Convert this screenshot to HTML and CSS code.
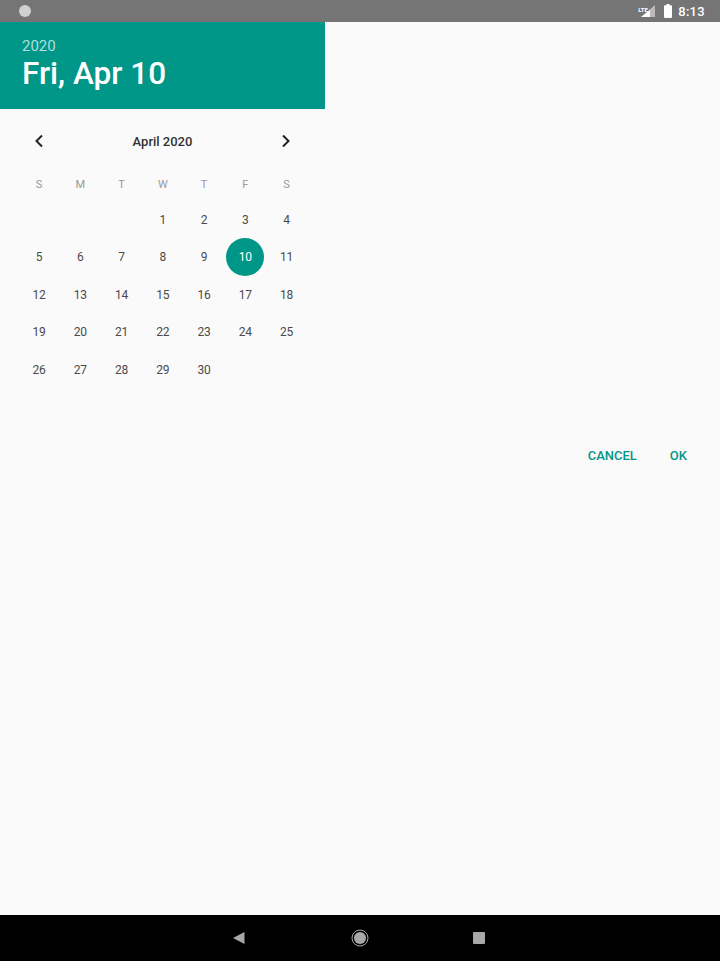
FILE: index.html
```html
<!DOCTYPE html>
<html lang="en">
<head>
    <meta charset="UTF-8">
    <meta name="viewport" content="width=device-width, initial-scale=1.0">
    <title>Date Picker</title>
    <link rel="stylesheet" href="styles.css">
</head>
<body>
    <div class="status-bar">
        <span class="status-dot"></span>
        <div class="status-right">
            <svg class="status-signal" width="20" height="14" viewBox="0 0 20 14">
                <path d="M17 1V13H3z" fill="#fff" opacity="0.5"/>
                <path d="M12 6V13H3z" fill="#fff"/>
            </svg>
            <span class="lte">LTE</span>
            <svg class="status-battery" width="8" height="14" viewBox="0 0 8 14">
                <path d="M2.5 0h3v1.2h1.5a1 1 0 0 1 1 1V13a1 1 0 0 1-1 1H1a1 1 0 0 1-1-1V2.2a1 1 0 0 1 1-1h1.5z" fill="#fff"/>
            </svg>
            <span class="status-time">8:13</span>
        </div>
    </div>

    <div class="dialog">
        <div class="picker">
            <div class="picker-header">
                <div class="picker-year">2020</div>
                <div class="picker-date">Fri, Apr 10</div>
            </div>

            <div class="month-row">
                <svg class="chevron" width="12" height="14" viewBox="0 0 12 14">
                    <path d="M9 1.5L3.5 7L9 12.5" fill="none" stroke="#222" stroke-width="2"/>
                </svg>
                <span class="month-name">April 2020</span>
                <svg class="chevron" width="12" height="14" viewBox="0 0 12 14">
                    <path d="M3 1.5L8.5 7L3 12.5" fill="none" stroke="#222" stroke-width="2"/>
                </svg>
            </div>

            <div class="weekdays">
                <span>S</span><span>M</span><span>T</span><span>W</span><span>T</span><span>F</span><span>S</span>
            </div>

            <div class="days">
                <span></span><span></span><span></span><span>1</span><span>2</span><span>3</span><span>4</span>
                <span>5</span><span>6</span><span>7</span><span>8</span><span>9</span><span class="selected">10</span><span>11</span>
                <span>12</span><span>13</span><span>14</span><span>15</span><span>16</span><span>17</span><span>18</span>
                <span>19</span><span>20</span><span>21</span><span>22</span><span>23</span><span>24</span><span>25</span>
                <span>26</span><span>27</span><span>28</span><span>29</span><span>30</span><span></span><span></span>
            </div>
        </div>

        <div class="actions">
            <span class="action">CANCEL</span>
            <span class="action">OK</span>
        </div>
    </div>

    <div class="nav-bar">
        <svg width="14" height="14" viewBox="0 0 14 14">
            <path d="M12.5 1V13L1 7z" fill="#a8a8a8"/>
        </svg>
        <svg width="18" height="18" viewBox="0 0 18 18">
            <circle cx="9" cy="9" r="8" fill="none" stroke="#a8a8a8" stroke-width="1"/>
            <circle cx="9" cy="9" r="6" fill="#a8a8a8"/>
        </svg>
        <svg width="12" height="12" viewBox="0 0 12 12">
            <rect width="12" height="12" rx="1" fill="#a8a8a8"/>
        </svg>
    </div>
</body>
</html>
```

FILE: styles.css
```css
html, body {
    height: 100%;
}
body {
    margin: 0;
    display: flex;
    flex-direction: column;
    font-family: Roboto, "Noto Sans", sans-serif;
    background-color: #FAFAFA;
    overflow: hidden;
}

/* status bar */
.status-bar {
    height: 22px;
    padding: 0 15px 0 19px;
    display: flex;
    align-items: center;
    justify-content: space-between;
    box-sizing: border-box;
    background-color: #757575;
}
.status-dot {
    width: 12px;
    height: 12px;
    border-radius: 50%;
    background-color: #D0D0D0;
}
.status-right {
    position: relative;
    display: flex;
    align-items: center;
    color: white;
}
.status-signal {
    margin-right: 6px;
}
.lte {
    position: absolute;
    left: 0;
    top: 2px;
    font-size: 6px;
    font-weight: 700;
    line-height: 7px;
}
.status-battery {
    margin-right: 6px;
}
.status-time {
    font-size: 13px;
    font-weight: 500;
    letter-spacing: 0.3px;
}

/* picker */
.dialog {
    flex: 1;
}
.picker {
    width: 325px;
}
.picker-header {
    height: 87px;
    padding: 16px 22px 0;
    box-sizing: border-box;
    background-color: #009688;
    color: white;
}
.picker-year {
    font-size: 15px;
    line-height: 17px;
    color: #B2DFDB;
}
.picker-date {
    font-size: 31.5px;
    font-weight: 500;
    line-height: 38px;
}
.month-row {
    height: 64px;
    padding: 0 33px;
    display: flex;
    align-items: center;
    justify-content: space-between;
}
.month-name {
    font-size: 13px;
    font-weight: 500;
    color: #333333;
}
.weekdays, .days {
    margin: 0 18.5px;
    display: grid;
    grid-template-columns: repeat(7, 41.25px);
    justify-items: center;
    align-items: center;
    text-align: center;
}
.weekdays {
    height: 22px;
    font-size: 11px;
    color: #999999;
}
.days {
    margin-top: 6px;
    grid-auto-rows: 37.5px;
    font-size: 12px;
    color: #4A4A4A;
}
.selected {
    width: 38px;
    height: 38px;
    line-height: 38px;
    border-radius: 50%;
    background-color: #009688;
    color: white;
}
.actions {
    margin-top: 59px;
    padding-right: 33px;
    display: flex;
    justify-content: flex-end;
    gap: 33px;
}
.action {
    font-size: 13px;
    font-weight: 500;
    color: #009688;
}

/* nav bar */
.nav-bar {
    height: 46px;
    padding-right: 3px;
    display: flex;
    align-items: center;
    justify-content: center;
    gap: 104.5px;
    background-color: #000000;
}
```
